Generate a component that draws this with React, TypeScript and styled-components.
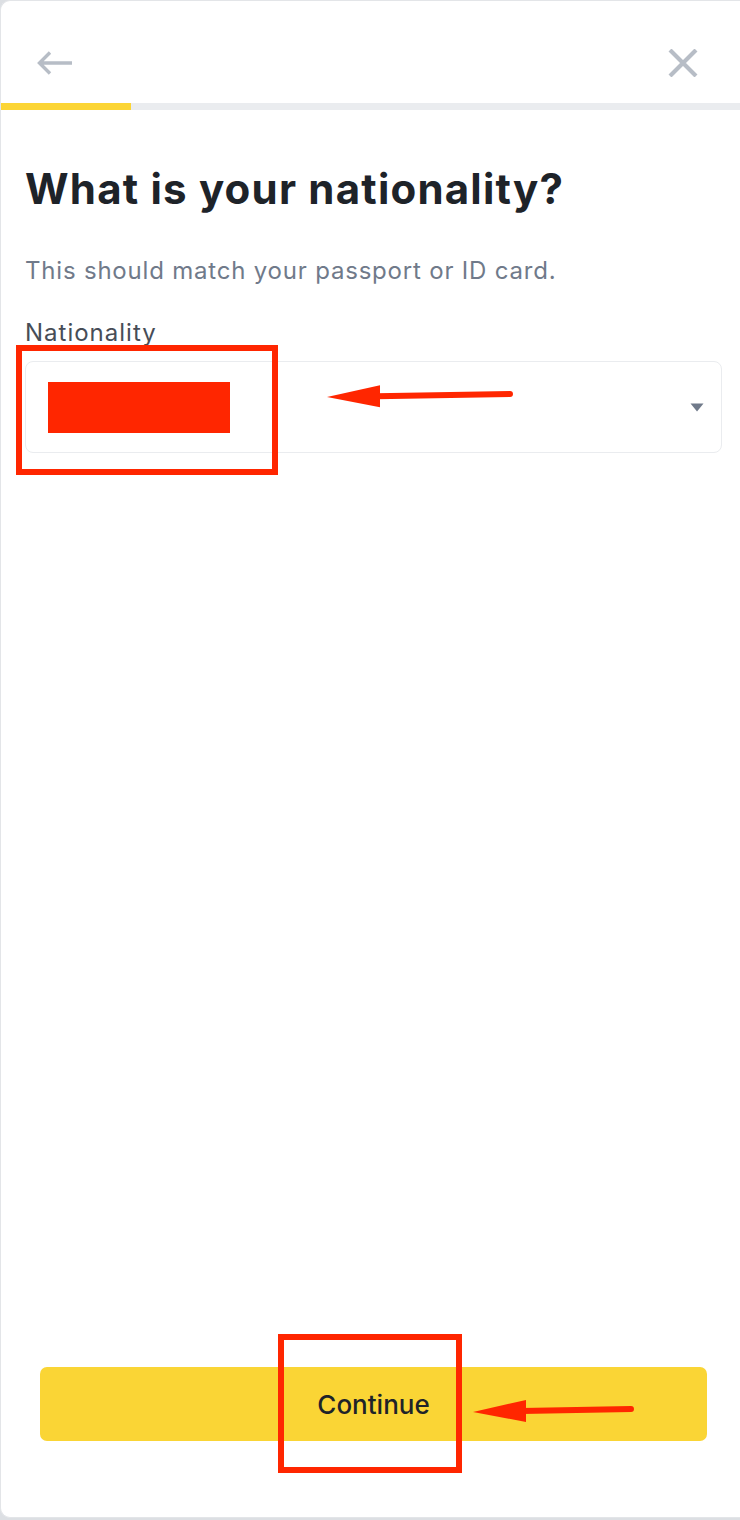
import React from "react";
import styled, { createGlobalStyle } from "styled-components";

const GlobalStyle = createGlobalStyle`
  html, body {
    margin: 0;
    padding: 0;
    background: #dcdfe3;
  }
  body {
    font-family: "Inter", "Noto Sans", sans-serif;
    color: #1e2329;
  }
`;

const Page = styled.div`
  position: relative;
  width: 740px;
  height: 1520px;
  overflow: hidden;
`;

const Card = styled.div`
  box-sizing: border-box;
  width: 760px;
  height: 1518px;
  background: #fff;
  border: 1px solid #e3e5e8;
  border-right: none;
  border-radius: 10px 0 0 10px;
  display: flex;
  flex-direction: column;
`;

const Header = styled.div`
  height: 102px;
  display: flex;
  align-items: center;
  justify-content: space-between;
  padding: 22px 43px 0 36px;
  box-sizing: border-box;
  width: 740px;
`;

const IconButton = styled.button`
  background: none;
  border: none;
  padding: 0;
  display: flex;
  cursor: pointer;
`;

const Progress = styled.div`
  height: 7px;
  width: 740px;
  background: #eaecef;
  display: flex;
`;

const ProgressFill = styled.div<{ $width: number }>`
  width: ${(p) => p.$width}px;
  background: #fcd535;
`;

const Content = styled.div`
  width: 740px;
  box-sizing: border-box;
  padding: 0 19px 0 24px;
  flex: 1;
  display: flex;
  flex-direction: column;
`;

const Title = styled.h1`
  margin: 53px 0 0;
  font-size: 42px;
  line-height: 52px;
  font-weight: 700;
  color: #1e2329;
  letter-spacing: 1.2px;
`;

const Subtitle = styled.p`
  margin: 41px 0 0;
  font-size: 24px;
  line-height: 30px;
  color: #707a8a;
  letter-spacing: 0.8px;
`;

const Label = styled.label`
  margin-top: 32px;
  font-size: 24px;
  line-height: 30px;
  color: #474d57;
  letter-spacing: 1px;
`;

const Select = styled.div`
  margin-top: 13px;
  height: 92px;
  box-sizing: border-box;
  border: 1.5px solid #eaecef;
  border-radius: 8px;
  display: flex;
  align-items: center;
  justify-content: space-between;
  padding: 0 17px 0 24px;
`;

const SelectValue = styled.span`
  font-size: 24px;
  color: #1e2329;
`;

const Spacer = styled.div`
  flex: 1;
`;

const ContinueButton = styled.button`
  margin: 0 34px 76px 39px;
  width: 667px;
  height: 74px;
  border: none;
  border-radius: 7px;
  background: #fad535;
  font-family: "Inter", "Noto Sans", sans-serif;
  font-size: 26px;
  font-weight: 500;
  color: #1e2329;
  cursor: pointer;
`;

const Overlay = styled.svg`
  position: absolute;
  left: 0;
  top: 0;
  pointer-events: none;
`;

const RED = "#ff2600";

const Arrow: React.FC<{ tip: [number, number]; tail: [number, number] }> = ({
  tip,
  tail,
}) => {
  const [tx, ty] = tip;
  const [ex, ey] = tail;
  const headLen = 53;
  const half = 11;
  const bx = tx + headLen;
  const by = ty + ((ey - ty) * headLen) / (ex - tx);
  return (
    <g>
      <line
        x1={bx - 4}
        y1={by}
        x2={ex}
        y2={ey}
        stroke={RED}
        strokeWidth={6}
        strokeLinecap="round"
      />
      <polygon
        points={`${tx},${ty} ${bx},${by - half} ${bx},${by + half}`}
        fill={RED}
      />
    </g>
  );
};

export default function App() {
  return (
    <Page>
      <GlobalStyle />
      <Card>
        <Header>
          <IconButton aria-label="Back">
            <svg width="36" height="24" viewBox="0 0 36 24" fill="none">
              <path
                d="M35 12H3M13 1.5L2.5 12L13 22.5"
                stroke="#b7bdc6"
                strokeWidth="3.4"
              />
            </svg>
          </IconButton>
          <IconButton aria-label="Close">
            <svg width="30" height="28" viewBox="0 0 30 28" fill="none">
              <path
                d="M2 1L28 27M28 1L2 27"
                stroke="#b7bdc6"
                strokeWidth="4.2"
              />
            </svg>
          </IconButton>
        </Header>
        <Progress>
          <ProgressFill $width={130} />
        </Progress>
        <Content>
          <Title>What is your nationality?</Title>
          <Subtitle>This should match your passport or ID card.</Subtitle>
          <Label>Nationality</Label>
          <Select>
            <SelectValue>Country</SelectValue>
            <svg width="14" height="9" viewBox="0 0 14 9">
              <path d="M0.5 0.5H13.5L7 8.5Z" fill="#707a8a" />
            </svg>
          </Select>
          <Spacer />
        </Content>
        <ContinueButton>Continue</ContinueButton>
      </Card>
      <Overlay width="740" height="1520" viewBox="0 0 740 1520">
        <rect x="48" y="382" width="182" height="51" fill={RED} />
        <rect
          x="19"
          y="348"
          width="256"
          height="124"
          fill="none"
          stroke={RED}
          strokeWidth="6"
        />
        <Arrow tip={[327, 397]} tail={[510, 394]} />
        <rect
          x="281"
          y="1337"
          width="178"
          height="133"
          fill="none"
          stroke={RED}
          strokeWidth="6"
        />
        <Arrow tip={[473, 1412]} tail={[631, 1409]} />
      </Overlay>
    </Page>
  );
}
